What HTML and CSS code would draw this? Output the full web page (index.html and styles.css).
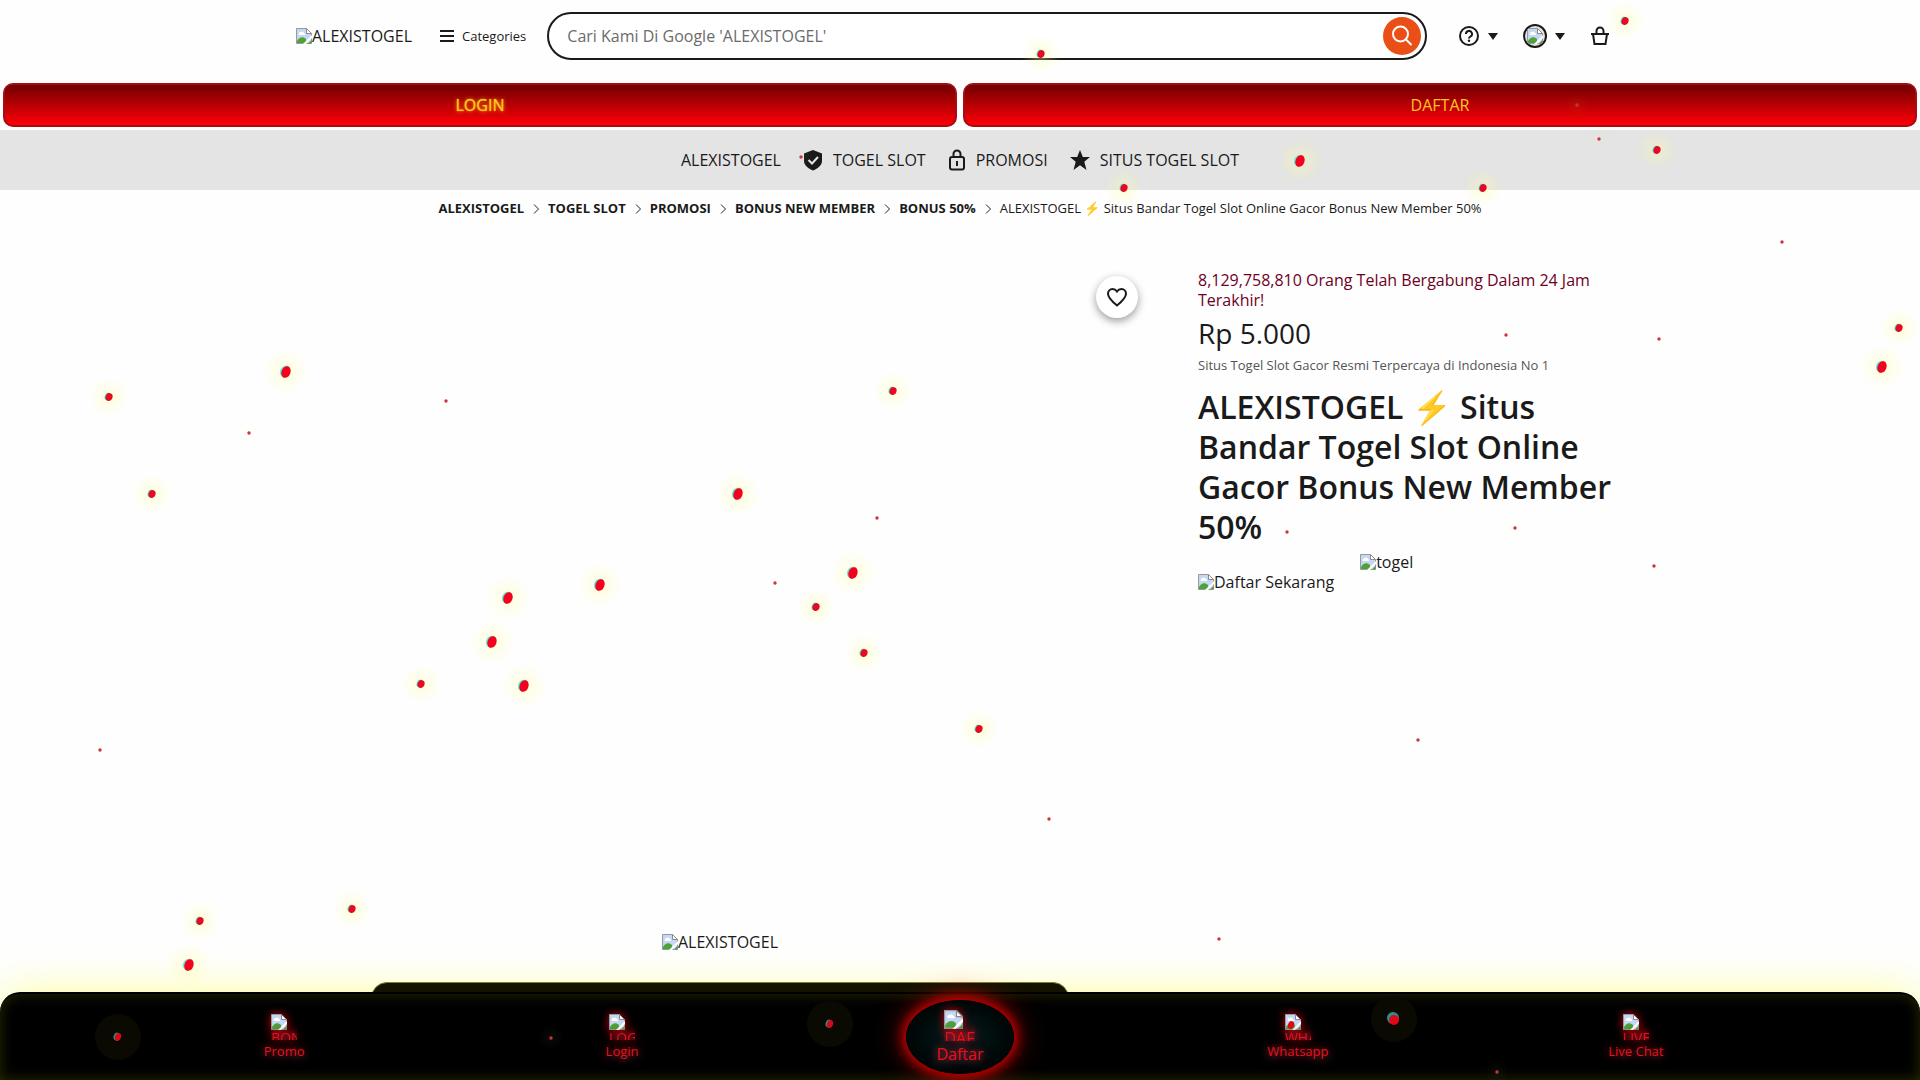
FILE: index.html
```html
<!DOCTYPE html>
<html lang="id">
<head>
<meta charset="utf-8">
<meta name="viewport" content="width=device-width, initial-scale=1">
<title>ALEXISTOGEL</title>
<link rel="stylesheet" href="styles.css">
</head>
<body>
<svg class="defs" aria-hidden="true">
  <defs>
    <symbol id="missing" viewBox="0 0 16 16">
      <path d="M.5.5h10l5 5v10H.5z" fill="#c6d7f6" stroke="#9a9a9a"/>
      <path d="M3 7a2 2 0 0 1 2-3 2 2 0 0 1 3 1 1.500 1.500 0 0 1 1 2z" fill="#fff"/>
      <path d="M1 15v-2c2-4 6-5 9-2v4z" fill="#4da338"/>
      <path d="M10.500.5v5h5z" fill="#fff" stroke="#8a8a8a"/>
      <path class="cut" d="M7 16l9-9v3l-6 6z" fill="#fff"/>
      <path d="M12 15.500h3.500V12z" fill="#4da338"/>
    </symbol>
    <symbol id="chevron" viewBox="0 0 8 12"><path d="M2 2.500l4.500 4.500L2 11.500" fill="none" stroke="#222"/></symbol>
    <symbol id="caret" viewBox="0 0 10 7"><path d="M0 0h10L5 7z" fill="#1a1a1a"/></symbol>
    <radialGradient id="glow">
      <stop offset="0" stop-color="#ffffa0" stop-opacity=".4"/>
      <stop offset=".45" stop-color="#ffffa0" stop-opacity=".2"/>
      <stop offset="1" stop-color="#ffffa0" stop-opacity="0"/>
    </radialGradient>
    <symbol id="flake-l" viewBox="-24 -24 48 48"><circle class="halo" r="23" fill="url(#glow)"/><ellipse cx="-1" cy="0" rx="5" ry="6" fill="#5fe6e6" transform="rotate(20)"/><ellipse rx="4.500" ry="6" fill="#f5001d" transform="rotate(20)"/></symbol>
    <symbol id="flake-m" viewBox="-24 -24 48 48"><circle class="halo" r="20" fill="url(#glow)"/><ellipse cx="-1" cy="0" rx="3.500" ry="4" fill="#5fe6e6" transform="rotate(20)"/><ellipse rx="3.500" ry="4" fill="#e80820" transform="rotate(20)"/></symbol>
    <symbol id="flake-s" viewBox="-24 -24 48 48"><circle r="13" fill="url(#glow)" opacity=".1"/><circle r="1.700" fill="#cc3340"/></symbol>
    <symbol id="flake-dark" viewBox="-24 -24 48 48"><circle r="23" fill="#0a0a02"/><ellipse cx="-1" cy="0" rx="3.500" ry="4" fill="#2a8f8f" transform="rotate(20)"/><ellipse rx="3" ry="4" fill="#d80818" transform="rotate(20)"/></symbol>
    <symbol id="flake-dark-l" viewBox="-24 -24 48 48"><circle r="23" fill="#0a0a02"/><circle cx="-1" cy="-1" r="6" fill="#2a8f8f"/><ellipse cy="1" rx="5" ry="5" fill="#e00818"/></symbol>
    <symbol id="flake-spot" viewBox="-24 -24 48 48"><ellipse rx="3" ry="4" fill="#e00818" transform="rotate(20)"/></symbol>
  </defs>
</svg>

<header class="header">
  <a class="broken" href="#"><svg class="broken-icon"><use href="#missing"/></svg>ALEXISTOGEL</a>
  <button class="categories" type="button">
    <svg width="16" height="14" viewBox="0 0 16 14"><path d="M1 2h14M1 7h14M1 12h14" stroke="#1a1a1a" stroke-width="2"/></svg>
    Categories
  </button>
  <form class="search">
    <input class="search-input" type="text" aria-label="Search" placeholder="Cari Kami Di Google 'ALEXISTOGEL'">
    <button class="search-button" type="button" aria-label="Search">
      <svg width="24" height="24" viewBox="0 0 24 24" fill="none" stroke="#fff" stroke-width="2"><circle cx="10.500" cy="10" r="7.500"/><path d="M16 15.500l5.500 5.500"/></svg>
    </button>
  </form>
  <div class="tools">
    <button class="tool" type="button" aria-label="Help">
      <svg width="22" height="22" viewBox="0 0 22 22" fill="none" stroke="#1a1a1a" stroke-width="2"><circle cx="11" cy="11" r="9"/><path d="M8 9a3 3 0 1 1 4.500 2.500Q11 12.500 11 13.500"/><circle cx="11" cy="15.700" r="1.200" fill="#1a1a1a" stroke="none"/></svg>
      <svg width="10" height="7"><use href="#caret"/></svg>
    </button>
    <button class="tool" type="button" aria-label="Account">
      <span class="avatar"><svg class="broken-icon"><use href="#missing"/></svg></span>
      <svg width="10" height="7"><use href="#caret"/></svg>
    </button>
    <button class="tool" type="button" aria-label="Basket">
      <svg width="20" height="20" viewBox="0 0 20 20" fill="none" stroke="#1a1a1a" stroke-width="2"><path d="M1 8h18M3 8l1.500 10h11L17 8M6.500 8V5a3.500 3.500 0 0 1 7 0v3"/></svg>
    </button>
  </div>
</header>

<div class="actions">
  <a class="action action-login" href="#">LOGIN</a>
  <a class="action" href="#">DAFTAR</a>
</div>

<nav class="topics">
  <a class="topic" href="#">ALEXISTOGEL</a>
  <a class="topic" href="#"><svg width="20" height="22" viewBox="0 0 20 22"><path d="M10 1l9 3.500V12c0 4-4 7.500-9 9.500C5 19.500 1 16 1 12V4.500z" fill="#1a1a1a"/><path d="M5.500 11l3.500 3.500 6-6.500" fill="none" stroke="#e4e4e4" stroke-width="2"/></svg>TOGEL SLOT</a>
  <a class="topic" href="#"><svg width="18" height="22" viewBox="0 0 18 22" fill="none" stroke="#1a1a1a" stroke-width="2"><rect x="2" y="8" width="14" height="12.500" rx="2"/><path d="M5.500 8V5a3.500 3.500 0 0 1 7 0v3M9 12v5"/></svg>PROMOSI</a>
  <a class="topic" href="#"><svg width="20" height="20" viewBox="0 0 20 20"><path d="M10 0l2.800 7H20l-5.700 4.700L16.500 20 10 15.200 3.500 20l2.200-8.300L0 7h7.200z" fill="#1a1a1a"/></svg>SITUS TOGEL SLOT</a>
</nav>

<nav class="crumbs" aria-label="Breadcrumb">
  <a href="#">ALEXISTOGEL</a><svg width="8" height="12"><use href="#chevron"/></svg>
  <a href="#">TOGEL SLOT</a><svg width="8" height="12"><use href="#chevron"/></svg>
  <a href="#">PROMOSI</a><svg width="8" height="12"><use href="#chevron"/></svg>
  <a href="#">BONUS NEW MEMBER</a><svg width="8" height="12"><use href="#chevron"/></svg>
  <a href="#">BONUS 50%</a><svg width="8" height="12"><use href="#chevron"/></svg>
  <span>ALEXISTOGEL ⚡ Situs Bandar Togel Slot Online Gacor Bonus New Member 50%</span>
</nav>

<main class="product">
  <section class="gallery">
    <button class="favorite" type="button" aria-label="Favorite">
      <svg width="22" height="22" viewBox="0 0 22 22"><path d="M11 19.500C6 15.500 2 12 2 7.800 2 5 4 3 6.500 3 8.500 3 10 4 11 5.500 12 4 13.500 3 15.500 3 18 3 20 5 20 7.800c0 4.200-4 7.700-9 11.700z" fill="none" stroke="#1a1a1a" stroke-width="2"/></svg>
    </button>
    <span class="broken slide"><svg class="broken-icon"><use href="#missing"/></svg>ALEXISTOGEL</span>
    <div class="panel"></div>
  </section>
  <section class="details">
    <p class="joined">8,129,758,810 Orang Telah Bergabung Dalam 24 Jam Terakhir!</p>
    <p class="price">Rp 5.000</p>
    <p class="note">Situs Togel Slot Gacor Resmi Terpercaya di Indonesia No 1</p>
    <h1 class="title">ALEXISTOGEL ⚡ Situs Bandar Togel Slot Online Gacor Bonus New Member 50%</h1>
    <div class="banners">
      <a class="broken banner-low" href="#"><svg class="broken-icon"><use href="#missing"/></svg>Daftar Sekarang</a>
      <a class="broken" href="#"><svg class="broken-icon"><use href="#missing"/></svg>togel</a>
    </div>
  </section>
</main>

<div class="dock-glow"></div>
<nav class="dock">
  <a class="dock-item" href="#"><span class="dock-image"><svg class="broken-icon"><use href="#missing"/></svg>BONUS</span>Promo</a>
  <a class="dock-item" href="#"><span class="dock-image"><svg class="broken-icon"><use href="#missing"/></svg>LOGIN</span>Login</a>
  <a class="dock-item dock-main" href="#"><span class="dock-image"><svg class="broken-icon"><use href="#missing"/></svg>DAFTAR</span>Daftar</a>
  <a class="dock-item" href="#"><span class="dock-image"><svg class="broken-icon"><use href="#missing"/></svg>WHATSAPP</span>Whatsapp</a>
  <a class="dock-item" href="#"><span class="dock-image"><svg class="broken-icon"><use href="#missing"/></svg>LIVE</span>Live Chat</a>
</nav>

<svg class="flakes" id="flakes" aria-hidden="true"></svg>
<script src="flakes.js"></script>
</body>
</html>
```
FILE: flakes.js
```js
// Falling flakes: centre x, centre y and symbol
const flakes = [
  [286,372,'l'],[738,494,'l'],[600,585,'l'],[853,573,'l'],[508,598,'l'],[492,642,'l'],[524,686,'l'],
  [1300,161,'l'],[1882,367,'l'],[189,965,'l'],
  [816,607,'m'],[864,653,'m'],[421,684,'m'],[109,397,'m'],[152,494,'m'],[1041,54,'m'],[1625,21,'m'],
  [1657,150,'m'],[1124,188,'m'],[1483,188,'m'],[1899,328,'m'],[893,391,'m'],[979,729,'m'],[200,921,'m'],
  [352,909,'m'],[118,1037,'dark'],[830,1024,'dark'],[1394,1019,'dark-l'],[1291,1025,'spot'],
  [877,518,'s'],[775,583,'s'],[249,433,'s'],[1577,105,'s'],[1599,139,'s'],[801,157,'s'],[1782,242,'s'],
  [1506,335,'s'],[1659,339,'s'],[446,401,'s'],[1287,532,'s'],[1515,528,'s'],[1654,566,'s'],[100,750,'s'],
  [1049,819,'s'],[1418,740,'s'],[1219,939,'s'],[551,1038,'s'],[1497,1072,'s']
];
const sky = document.getElementById('flakes');
for (const [x, y, kind] of flakes) {
  const flake = document.createElementNS('http://www.w3.org/2000/svg', 'use');
  flake.setAttribute('href', '#flake-' + kind);
  flake.setAttribute('x', x - 24);
  flake.setAttribute('y', y - 24);
  flake.setAttribute('width', 48);
  flake.setAttribute('height', 48);
  sky.append(flake);
}
```
FILE: styles.css
```css
* { box-sizing: border-box; }
body {
  margin: 0;
  min-height: 100vh;
  display: flex;
  flex-direction: column;
  overflow: hidden;
  background: #fefefe;
  color: #1a1a1a;
  font: 16px/20px "Open Sans", "Noto Sans", sans-serif;
}
a { color: inherit; text-decoration: none; }
button { border: 0; padding: 0; background: none; color: inherit; font: inherit; }
p, h1 { margin: 0; }
svg { flex: none; }
.defs { position: absolute; width: 0; height: 0; }

.broken { display: inline-flex; align-items: center; white-space: nowrap; }
.broken-icon { display: block; width: 16px; height: 16px; }

.header {
  display: flex;
  align-items: center;
  width: 100%;
  max-width: 1376px;
  margin: 0 auto;
  padding: 12px 24px 23px;
}
.categories { display: flex; align-items: center; gap: 7px; margin: 0 21px 0 27px; font-size: 13px; }
.search {
  flex: 1;
  display: flex;
  align-items: center;
  height: 48px;
  padding: 0 4px 0 18px;
  border: 2px solid #1a1a1a;
  border-radius: 24px;
  background: #fff;
}
.search-input { flex: 1; min-width: 0; border: 0; padding: 0; outline: 0; background: none; font: inherit; }
.search-input::placeholder { color: #6b6b6b; opacity: 1; }
.search-button {
  display: grid;
  place-items: center;
  width: 38px;
  height: 38px;
  border-radius: 50%;
  background: #eb4f18;
}
.tools { display: flex; align-items: center; gap: 25px; margin: 0 14px 0 31px; }
.tool { display: flex; align-items: center; gap: 8px; }
.avatar {
  display: grid;
  place-items: center;
  width: 24px;
  height: 24px;
  border: 2px solid #1a1a1a;
  border-radius: 50%;
  overflow: hidden;
  background: #e4e4e4;
}

.actions { display: flex; gap: 6px; padding: 0 3px 3px; }
.action {
  flex: 1;
  height: 44px;
  border: 2px solid #a50d12;
  border-radius: 10px;
  background: linear-gradient(#700000, #ff0008);
  color: #ffc524;
  line-height: 40px;
  text-align: center;
}
.action-login { text-shadow: 0 0 4px #ffb400, 0 0 1px #ffc524; }

.topics {
  display: flex;
  justify-content: center;
  align-items: center;
  gap: 22px;
  height: 60px;
  background: #e4e4e4;
}
.topic { display: flex; align-items: center; gap: 10px; }

.crumbs {
  display: flex;
  justify-content: center;
  align-items: center;
  gap: 8px;
  padding-top: 8px;
  font-size: 13px;
}
.crumbs a { font-weight: 700; }

.product {
  flex: 1;
  display: flex;
  gap: 54px;
  width: 100%;
  max-width: 1376px;
  margin: 0 auto;
  padding: 52px 24px 0;
}
.gallery { flex: 1; display: flex; flex-direction: column; align-items: center; padding-top: 6px; }
.favorite {
  display: grid;
  place-items: center;
  align-self: flex-end;
  width: 42px;
  height: 42px;
  margin-right: 6px;
  border-radius: 50%;
  background: #fff;
  box-shadow: 0 3px 8px rgba(0, 0, 0, .4);
}
.slide { margin: auto 0 30px; }
.panel {
  position: relative;
  z-index: 1;
  width: 698px;
  max-width: 100%;
  height: 98px;
  border: 1px solid #82821e;
  border-radius: 16px;
  background: #121200;
}

.details { width: 426px; }
.joined { color: #6e0024; }
.price { margin-top: 7px; font-size: 28px; line-height: 32px; }
.note { margin-top: 6px; color: #555; font-size: 13px; }
.title { margin: 12px 0 5px; font-size: 32px; font-weight: 600; line-height: 40px; }
.banners { display: flex; align-items: flex-start; gap: 26px; }
.banner-low { margin-top: 20px; }

.dock, .dock-glow {
  position: fixed;
  left: 0;
  right: 0;
  bottom: 0;
  height: 88px;
  border-radius: 20px 20px 0 0;
}
.dock-glow { box-shadow: 0 0 40px rgba(255, 255, 60, .5); }
.dock {
  z-index: 2;
  display: grid;
  grid-template-columns: repeat(5, 1fr);
  align-items: start;
  padding: 0 6%;
  border-top: 2px solid #000;
  background: #000;
  box-shadow: inset 0 0 14px #2b2b00;
}
.dock-item {
  display: flex;
  flex-direction: column;
  align-items: center;
  padding-top: 20px;
  color: #e8101c;
  font-size: 13px;
  line-height: 18px;
  text-shadow: 0 0 8px #e8101c, 0 2px 12px #1f5560;
}
.dock-image {
  width: 26px;
  height: 26px;
  margin-bottom: 2px;
  overflow: hidden;
  font-size: 14px;
  line-height: 16px;
  filter: drop-shadow(0 0 4px #d00010);
}
.dock-main {
  justify-self: center;
  width: 108px;
  height: 74px;
  margin-top: 6px;
  padding-top: 10px;
  border-radius: 50%;
  background: radial-gradient(#071d20, #000808 60%, #000);
  box-shadow: 0 0 12px 3px #d00000, 0 0 32px rgba(255, 0, 0, .6);
  font-size: 16px;
  line-height: 22px;
}
.dock-main .dock-image { width: 31px; height: 31px; font-size: 16px; line-height: 18px; }
.dock-main .broken-icon { width: 19px; height: 19px; }
.dock .cut { fill: #600; }
.flakes { position: fixed; z-index: 3; inset: 0; width: 100%; height: 100%; pointer-events: none; }
```
